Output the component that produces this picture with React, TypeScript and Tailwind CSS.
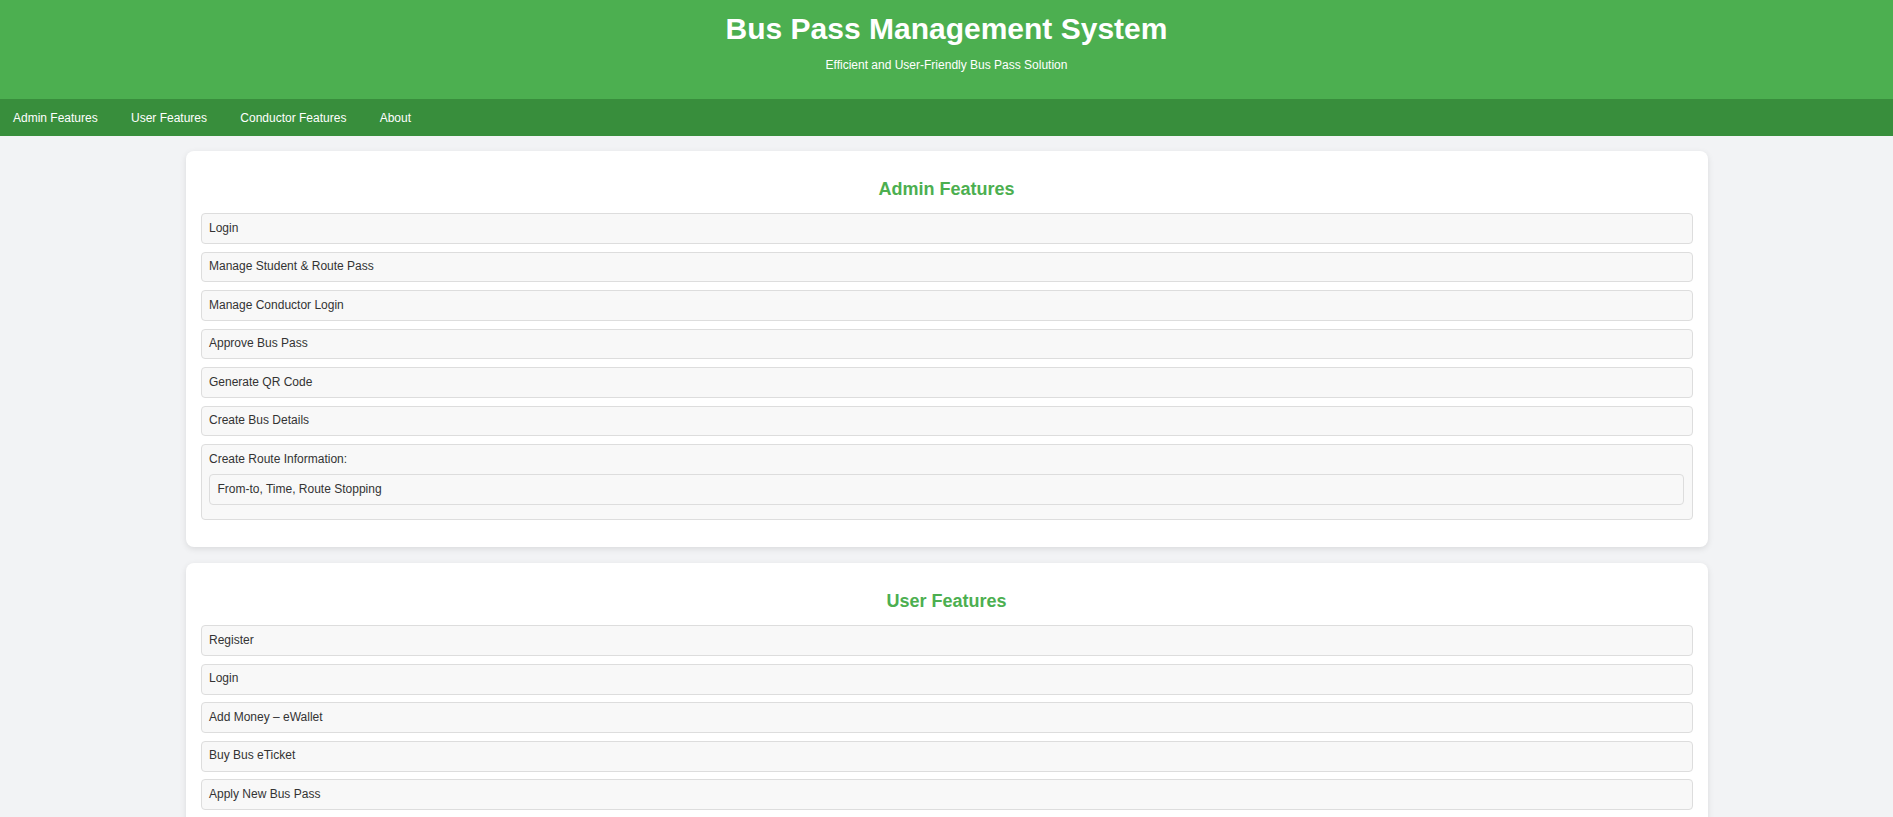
import React from "react";

type Item = { label: string; sub?: string[] };

const sections: { title: string; items: Item[] }[] = [
  {
    title: "Admin Features",
    items: [
      { label: "Login" },
      { label: "Manage Student & Route Pass" },
      { label: "Manage Conductor Login" },
      { label: "Approve Bus Pass" },
      { label: "Generate QR Code" },
      { label: "Create Bus Details" },
      { label: "Create Route Information:", sub: ["From-to, Time, Route Stopping"] },
    ],
  },
  {
    title: "User Features",
    items: [
      { label: "Register" },
      { label: "Login" },
      { label: "Add Money – eWallet" },
      { label: "Buy Bus eTicket" },
      { label: "Apply New Bus Pass" },
      { label: "Renew Bus Pass" },
      { label: "View Bus Pass with QR Code" },
      { label: "Check Bus Timings & Routes" },
    ],
  },
  {
    title: "Conductor Features",
    items: [
      { label: "Login" },
      { label: "Scan QR Code" },
      { label: "Verify Bus Pass" },
      { label: "View Passenger Details" },
    ],
  },
  {
    title: "About",
    items: [{ label: "Bus Pass Management System – Efficient and User-Friendly Bus Pass Solution" }],
  },
];

function ItemBox({ item }: { item: Item }) {
  return (
    <div className="border border-[#dddddd] bg-[#f8f8f8] rounded-[4px] px-[7.5px] py-[7.5px] text-[12px] leading-[13.7px] text-[#333333]">
      <div>{item.label}</div>
      {item.sub && (
        <div className="mt-[8px] mb-[6.8px] flex flex-col gap-[7.8px]">
          {item.sub.map((s) => (
            <div
              key={s}
              className="border border-[#dddddd] bg-[#f8f8f8] rounded-[4px] px-[7.5px] py-[7.5px] text-[12px] leading-[13.7px] text-[#333333]"
            >
              {s}
            </div>
          ))}
        </div>
      )}
    </div>
  );
}

export default function App() {
  return (
    <div
      className="min-h-screen bg-[#f2f3f5]"
      style={{ fontFamily: '"Liberation Sans", Arial, sans-serif' }}
    >
      <header className="bg-[#4caf50] text-white text-center pt-[11.5px] pb-[27px]">
        <h1 className="text-[30px] font-bold leading-[34px]">Bus Pass Management System</h1>
        <p className="mt-[12.6px] text-[12px] leading-[14px]">Efficient and User-Friendly Bus Pass Solution</p>
      </header>
      <nav className="bg-[#388e3c] h-[37px] flex items-center pl-[13px] gap-[33.3px] text-white text-[12px] leading-[14px]">
        <a href="#admin">Admin Features</a>
        <a href="#user">User Features</a>
        <a href="#conductor">Conductor Features</a>
        <a href="#about">About</a>
      </nav>
      <main className="w-[1522px] mx-auto pt-[15px] pb-[16px] flex flex-col gap-[16px]">
        {sections.map((sec) => (
          <section
            key={sec.title}
            className="bg-white rounded-[8px] shadow-[0_2px_6px_rgba(0,0,0,0.1)] px-[15px] pt-[28px] pb-[27px]"
          >
            <h2 className="text-center text-[#4caf50] font-bold text-[18px] leading-[21px] mb-[13px]">
              {sec.title}
            </h2>
            <div className="flex flex-col gap-[7.8px]">
              {sec.items.map((it, i) => (
                <ItemBox key={i} item={it} />
              ))}
            </div>
          </section>
        ))}
      </main>
    </div>
  );
}
